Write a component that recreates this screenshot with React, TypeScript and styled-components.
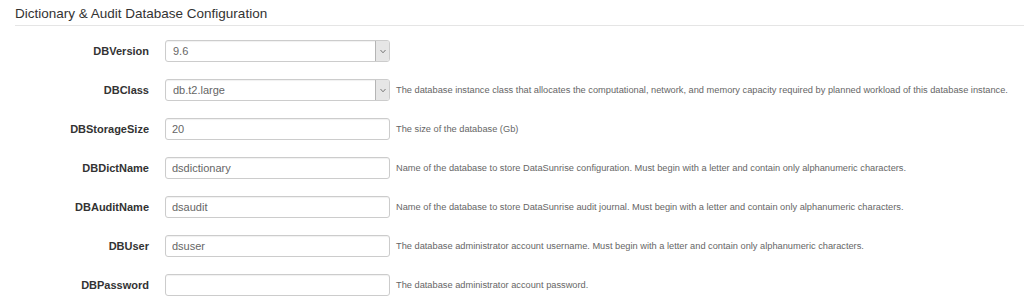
import styled, { createGlobalStyle } from "styled-components";

const GlobalStyle = createGlobalStyle`
  html, body {
    margin: 0;
    padding: 0;
    background: #fff;
    font-family: "Liberation Sans", Arial, sans-serif;
  }
`;

type Field = {
  name: string;
  value: string;
  select?: boolean;
  help?: string;
};

const fields: Field[] = [
  { name: "DBVersion", value: "9.6", select: true },
  {
    name: "DBClass",
    value: "db.t2.large",
    select: true,
    help: "The database instance class that allocates the computational, network, and memory capacity required by planned workload of this database instance.",
  },
  { name: "DBStorageSize", value: "20", help: "The size of the database (Gb)" },
  {
    name: "DBDictName",
    value: "dsdictionary",
    help: "Name of the database to store DataSunrise configuration. Must begin with a letter and contain only alphanumeric characters.",
  },
  {
    name: "DBAuditName",
    value: "dsaudit",
    help: "Name of the database to store DataSunrise audit journal. Must begin with a letter and contain only alphanumeric characters.",
  },
  {
    name: "DBUser",
    value: "dsuser",
    help: "The database administrator account username. Must begin with a letter and contain only alphanumeric characters.",
  },
  { name: "DBPassword", value: "", help: "The database administrator account password." },
];

export default function App() {
  return (
    <>
      <GlobalStyle />
      <Section>
        <Title>Dictionary &amp; Audit Database Configuration</Title>
        <Form>
          {fields.map((f) => (
            <Row key={f.name}>
              <Label>{f.name}</Label>
              {f.select ? (
                <SelectBox>
                  <SelectValue>{f.value}</SelectValue>
                  <Caret>
                    <svg width="8" height="5" viewBox="0 0 8 5">
                      <path d="M1.5 1 L4 3.8 L6.5 1" fill="none" stroke="#777" strokeWidth="1" />
                    </svg>
                  </Caret>
                </SelectBox>
              ) : (
                <Input readOnly value={f.value} />
              )}
              {f.help && <Help>{f.help}</Help>}
            </Row>
          ))}
        </Form>
      </Section>
    </>
  );
}

const Section = styled.div`
  padding: 5px 0 0 15px;
`;

const Title = styled.h3`
  margin: 0;
  padding-bottom: 3px;
  font-size: 13.5px;
  font-weight: normal;
  color: #333;
  line-height: 17px;
  border-bottom: 1px solid #e5e5e5;
`;

const Form = styled.div`
  display: flex;
  flex-direction: column;
  gap: 17px;
  padding-top: 14px;
`;

const Row = styled.div`
  display: flex;
  align-items: center;
  height: 22px;
`;

const Label = styled.div`
  width: 134px;
  padding-right: 16px;
  text-align: right;
  font-size: 11px;
  font-weight: bold;
  color: #333;
`;

const fieldBox = `
  box-sizing: border-box;
  width: 225px;
  height: 22px;
  border: 1px solid #ccc;
  border-radius: 3px;
  background: #fff;
  box-shadow: inset 0 1px 1px rgba(0, 0, 0, 0.06);
  font-family: "Liberation Sans", Arial, sans-serif;
  font-size: 11px;
  color: #666;
`;

const Input = styled.input`
  ${fieldBox}
  padding: 0 6px;
  outline: none;
`;

const SelectBox = styled.div`
  ${fieldBox}
  display: flex;
  align-items: stretch;
  padding-left: 7px;
`;

const SelectValue = styled.span`
  flex: 1;
  display: flex;
  align-items: center;
`;

const Caret = styled.span`
  width: 13px;
  display: flex;
  align-items: center;
  justify-content: center;
  background: #e6e6e6;
  border-left: 1px solid #b5b5b5;
  border-radius: 0 2px 2px 0;
`;

const Help = styled.span`
  margin-left: 6px;
  font-size: 9.25px;
  color: #666;
  white-space: nowrap;
`;
